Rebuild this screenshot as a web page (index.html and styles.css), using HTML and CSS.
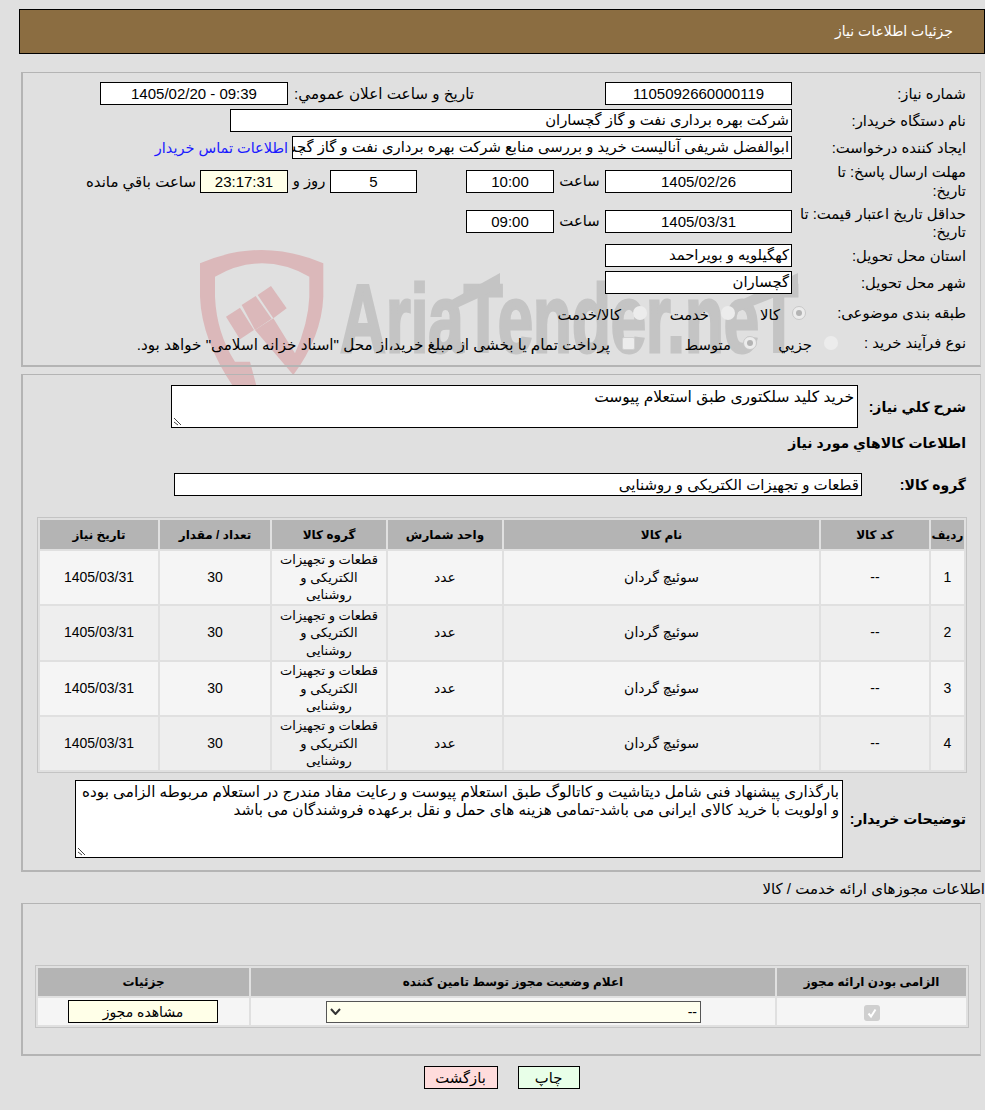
FILE: index.html
```html
<!DOCTYPE html>
<html lang="fa" dir="rtl">
<head>
<meta charset="utf-8">
<title>جزئیات اطلاعات نیاز</title>
<link rel="stylesheet" href="styles.css">
</head>
<body>
<svg class="wm" width="620" height="160" viewBox="0 0 620 160" aria-hidden="true">
  <g class="wm-mark" transform="scale(0.3333)">
    <path d="M30 70Q215 -10 400 70L400 170Q395 290 310 405L195 270L250 235L315 340Q355 250 358 170L358 110Q215 30 75 110L75 170Q80 280 135 365L180 365L200 440L130 440Q35 300 30 170Z"/>
    <path d="M108 230L150 203L192 270L150 298Z"/>
    <path d="M155 195L197 168L245 236L195 270Z"/>
    <path d="M203 165L243 138L290 205L250 235Z"/>
  </g>
  <text class="wm-text" x="150" y="112" textLength="458" lengthAdjust="spacingAndGlyphs">AriaTender.neT</text>
  <path class="wm-bar" d="M258 62L310 33L310 48L258 72Z"/>
  <path class="wm-bar" d="M547 62L608 33L608 48L547 72Z"/>
</svg>
<main class="page">
  <h1 class="title">جزئیات اطلاعات نیاز</h1>

  <section class="panel info">
    <div class="row r1">
      <label class="lbl">شماره نیاز:</label>
      <div class="box w187 center">1105092660000119</div>
      <label class="pub">تاریخ و ساعت اعلان عمومي:</label>
      <div class="box w188 center" dir="ltr">1405/02/20 - 09:39</div>
    </div>
    <div class="row r2">
      <label class="lbl">نام دستگاه خریدار:</label>
      <div class="box w562">شرکت بهره برداری نفت و گاز گچساران</div>
    </div>
    <div class="row r3">
      <label class="lbl">ایجاد کننده درخواست:</label>
      <div class="box w500">ابوالفضل شریفی آنالیست خرید و بررسی منابع شرکت بهره برداری نفت و گاز گچساران</div>
      <a class="link" href="#">اطلاعات تماس خریدار</a>
    </div>
    <div class="row r4">
      <label class="lbl">مهلت ارسال پاسخ: تا تاریخ:</label>
      <div class="box w187 center">1405/02/26</div>
      <span class="saat">ساعت</span>
      <div class="box w88 center">10:00</div>
      <div class="box w87 center days">5</div>
      <span class="rooz">روز و</span>
      <div class="box w88 center cream">23:17:31</div>
      <span class="left">ساعت باقي مانده</span>
    </div>
    <div class="row r5">
      <label class="lbl">حداقل تاریخ اعتبار قیمت: تا تاریخ:</label>
      <div class="box w187 center">1405/03/31</div>
      <span class="saat">ساعت</span>
      <div class="box w88 center">09:00</div>
    </div>
    <div class="row r6">
      <label class="lbl">استان محل تحویل:</label>
      <div class="box w187">کهگیلویه و بویراحمد</div>
    </div>
    <div class="row r7">
      <label class="lbl">شهر محل تحویل:</label>
      <div class="box w187">گچساران</div>
    </div>
    <div class="row r8">
      <label class="lbl">طبقه بندی موضوعی:</label>
      <span class="opts o1"><i class="radio on"></i><span>کالا</span></span>
      <span class="opts o2"><i class="radio"></i><span>خدمت</span></span>
      <span class="opts o3"><i class="radio"></i><span>کالا/خدمت</span></span>
    </div>
    <div class="row r9">
      <label class="lbl">نوع فرآیند خرید :</label>
      <span class="opts o4"><i class="radio"></i><span>جزیي</span></span>
      <span class="opts o5"><i class="radio on"></i><span>متوسط</span></span>
      <i class="check"></i>
      <span class="pay">پرداخت تمام یا بخشی از مبلغ خرید،از محل "اسناد خزانه اسلامی" خواهد بود.</span>
    </div>
  </section>

  <section class="panel need">
    <div class="row desc">
      <label class="blbl">شرح کلي نیاز:</label>
      <div class="area a1">خرید کلید سلکتوری طبق استعلام پیوست<svg class="grip" width="9" height="9" viewBox="0 0 9 9"><path d="M1 1L8 8M1 5L5 8" stroke="#444" fill="none"/></svg></div>
    </div>
    <h2 class="blbl head">اطلاعات کالاهاي مورد نیاز</h2>
    <div class="row grp">
      <label class="blbl">گروه کالا:</label>
      <div class="box g">قطعات و تجهیزات الکتریکی و روشنایی</div>
    </div>
    <table class="grid items">
      <thead>
        <tr><th class="c1">ردیف</th><th class="c2">کد کالا</th><th class="c3">نام کالا</th><th class="c4">واحد شمارش</th><th class="c5">گروه کالا</th><th class="c6">تعداد / مقدار</th><th class="c7">تاریخ نیاز</th></tr>
      </thead>
      <tbody>
        <tr class="odd"><td>1</td><td>--</td><td>سوئیچ گردان</td><td>عدد</td><td class="gc">قطعات و تجهیزات الکتریکی و روشنایی</td><td>30</td><td>1405/03/31</td></tr>
        <tr class="even tall"><td>2</td><td>--</td><td>سوئیچ گردان</td><td>عدد</td><td class="gc">قطعات و تجهیزات الکتریکی و روشنایی</td><td>30</td><td>1405/03/31</td></tr>
        <tr class="odd"><td>3</td><td>--</td><td>سوئیچ گردان</td><td>عدد</td><td class="gc">قطعات و تجهیزات الکتریکی و روشنایی</td><td>30</td><td>1405/03/31</td></tr>
        <tr class="even"><td>4</td><td>--</td><td>سوئیچ گردان</td><td>عدد</td><td class="gc">قطعات و تجهیزات الکتریکی و روشنایی</td><td>30</td><td>1405/03/31</td></tr>
      </tbody>
    </table>
    <div class="row note">
      <label class="blbl">توضیحات خریدار:</label>
      <div class="area a2">بارگذاری پیشنهاد فنی شامل دیتاشیت و کاتالوگ طبق استعلام پیوست و رعایت مفاد مندرج در استعلام مربوطه الزامی بوده و اولویت با خرید کالای ایرانی می باشد-تمامی هزینه های حمل و نقل برعهده فروشندگان می باشد<svg class="grip" width="9" height="9" viewBox="0 0 9 9"><path d="M1 1L8 8M1 5L5 8" stroke="#444" fill="none"/></svg></div>
    </div>
  </section>

  <p class="sub">اطلاعات مجوزهای ارائه خدمت / کالا</p>

  <section class="panel lic">
    <table class="grid licenses">
      <thead>
        <tr><th class="l1">الزامی بودن ارائه مجوز</th><th class="l2">اعلام وضعیت مجوز توسط تامین کننده</th><th class="l3">جزئیات</th></tr>
      </thead>
      <tbody>
        <tr>
          <td><span class="tick"><svg width="12" height="12" viewBox="0 0 12 12"><path d="M2.5 6.5L5 9.5L9.5 2.5" stroke="#fff" stroke-width="2" fill="none"/></svg></span></td>
          <td><div class="select"><span>--</span><svg width="11" height="7" viewBox="0 0 11 7"><path d="M1 1L5.5 6L10 1" stroke="#333" stroke-width="2" fill="none"/></svg></div></td>
          <td><div class="view">مشاهده مجوز</div></td>
        </tr>
      </tbody>
    </table>
  </section>

  <div class="actions">
    <button class="btn print">چاپ</button>
    <button class="btn back">بازگشت</button>
  </div>
</main>
</body>
</html>
```
FILE: styles.css
```css
* { box-sizing: border-box; }
html, body { margin: 0; padding: 0; }
body {
  width: 985px; height: 1110px; overflow: hidden; position: relative;
  background: #e0e0e0; color: #000;
  font: 14.8px/18px "Liberation Sans", "DejaVu Sans", sans-serif;
}
.wm { position: absolute; left: 190px; top: 240px; z-index: 0; direction: ltr; }
.wm-mark path { fill: #dbb8ba; }
.wm-bar { fill: #c4c4c4; }
.wm-text { direction: ltr; font: bold 96px "Liberation Sans Narrow", "Liberation Sans", sans-serif; fill: #c4c4c4; stroke: #c4c4c4; stroke-width: 3px; }
.page { position: relative; z-index: 1; padding: 9px 0 0; }
.title {
  margin: 0 0 18px; width: 966px; height: 45px;
  background: #8b6d41; border: 1px solid #000; color: #fff;
  font-size: 14px; font-weight: normal; line-height: 43px; padding-right: 31px;
}
.panel { width: 960px; margin-right: 4px; border-style: solid; border-color: #b4b4b4 #c8c8c8 #b4b4b4 #b4b4b4; border-width: 1px 1px 2px 2px; }
.info { height: 295px; padding: 9px 0 0; margin-bottom: 7px; }
.need { height: 498px; padding: 10px 0 0; }
.lic { height: 153px; padding: 61px 0 0; }
.row { display: flex; align-items: center; }
.lbl { width: 188px; padding-right: 14px; padding-left: 6px; flex: none; }
.box { height: 23px; border: 1px solid #000; background: #fff; line-height: 21px; padding: 0 2px; white-space: nowrap; overflow: hidden; flex: none; }
.center { text-align: center; font-size: 15px; }
.cream { background: #ffffe8; }
.w187 { width: 187px; }
.w188 { width: 188px; }
.w88 { width: 88px; }
.w87 { width: 87px; }
.w562 { width: 562px; }
.w500 { width: 500px; }
.r1, .r2, .r3, .r6, .r7 { height: 23px; }
.pub { width: 317px; padding-right: 131px; flex: none; white-space: nowrap; font-size: 15.2px; }
.r2, .r3 { margin-top: 4px; }
.link { color: #1a1aff; text-decoration: none; margin-right: 4px; white-space: nowrap; font-size: 14.5px; }
.r4 { margin-top: 11px; height: 38px; align-items: flex-start; }
.r4 .lbl { padding-left: 20px; margin-top: -7px; line-height: 19px; }
.saat { width: 51px; text-align: center; flex: none; line-height: 23px; }
.days { margin-right: 49px; }
.rooz { width: 42px; text-align: center; flex: none; line-height: 23px; }
.left { margin-right: 4px; line-height: 23px; white-space: nowrap; font-size: 15px; }
.r5 { margin-top: 2px; height: 38px; align-items: flex-start; }
.r5 .lbl { margin-top: -5px; }
.r6 { margin-top: -4px; }
.r7 { margin-top: 4px; }
.r8, .r9 { height: 22px; }
.r8 { margin-top: 8px; }
.r9 { margin-top: 8px; }
.r8 .lbl { width: 174px; padding-left: 0; }
.r9 .lbl { width: 142px; padding-left: 0; }
.opts { display: flex; align-items: center; flex: none; }
.opts span { margin-right: 12px; padding-top: 3px; }
.radio { display: block; width: 14px; height: 14px; border-radius: 50%; background: #ececec; flex: none; position: relative; }
.on { border: 1px solid #c8c8c8; }
.on::after { content: ""; position: absolute; inset: 3px; border-radius: 50%; background: #b4b4b4; }
.o1 { width: 71px; }
.o2 { width: 88px; }
.o4 { width: 81px; }
.o5 { width: 122px; }
.check { width: 13px; height: 13px; background: #ececec; border: 1px solid #d0d0d0; border-radius: 2px; flex: none; margin-left: 12px; }
.pay { white-space: nowrap; padding-top: 3px; font-size: 15.2px; }
.blbl { font-size: 14px; font-weight: bold; flex: none; margin: 0; white-space: nowrap; }
.desc { height: 43px; padding-right: 14px; }
.desc .blbl { width: 108px; }
.a1 { width: 687px; height: 43px; font-size: 15.5px; }
.area { position: relative; background: #fff; border: 1px solid #000; padding: 2px 3px; line-height: 18px; }
.grip { position: absolute; left: 1px; bottom: 1px; }
.head { margin-top: 6px; padding-right: 14px; line-height: 19px; height: 19px; }
.grp { height: 23px; margin-top: 20px; padding-right: 14px; }
.grp .blbl { width: 104px; }
.g { width: 688px; font-size: 15px; }
.grid { border-collapse: separate; border-spacing: 2px; table-layout: fixed; border: 1px solid #c4c4c4; }
.grid th { background: #b4b4b4; font-size: 12px; font-weight: bold; padding: 0; height: 28px; }
.grid td { text-align: center; padding: 0; vertical-align: middle; font-size: 14px; }
.items { width: 928px; margin: 21px 13px 0 0; }
.items th { height: 29px; }
.items td { height: 53px; line-height: 17.5px; }
.items .tall td { height: 54px; }
.items td.gc { font-size: 13px; padding: 0 6px; }
.odd td { background: #f5f5f5; }
.even td { background: #eee; }
.c1 { width: 33px; }
.c2 { width: 108px; }
.c3 { width: 315px; }
.c4 { width: 114px; }
.c5 { width: 114px; }
.c6 { width: 110px; }
.c7 { width: 118px; }
.note { margin-top: 7px; height: 78px; padding-right: 14px; }
.note .blbl { width: 123px; }
.a2 { width: 768px; height: 78px; font-size: 15.2px; }
.sub { margin: 8px 0 5px; line-height: 18px; height: 18px; white-space: nowrap; font-size: 15px; }
.licenses { width: 932px; margin-right: 11px; }
.licenses td { height: 27px; background: #f5f5f5; }
.l1 { width: 189px; }
.l2 { width: 524px; }
.l3 { width: 211px; }
.tick { display: inline-flex; width: 16px; height: 16px; border-radius: 3px; background: #cfcfcf; align-items: center; justify-content: center; vertical-align: middle; }
.select { width: 375px; height: 22px; margin: 0 74px 0 75px; background: #ffffee; border: 1px solid #555; display: flex; justify-content: space-between; align-items: center; padding: 0 3px; }
.view { width: 150px; height: 23px; margin-right: 31px; background: #ffffe8; border: 1px solid #000; line-height: 22px; }
.actions { display: flex; justify-content: center; gap: 20px; margin-top: 10px; padding-left: 18px; width: 985px; }
.btn { height: 23px; border: 1px solid #000; font: 14.8px/20px "Liberation Sans", "DejaVu Sans", sans-serif; padding: 0; color: #000; }
.print { width: 62px; background: #e8ffe8; }
.back { width: 74px; background: #ffdcdc; }
```
